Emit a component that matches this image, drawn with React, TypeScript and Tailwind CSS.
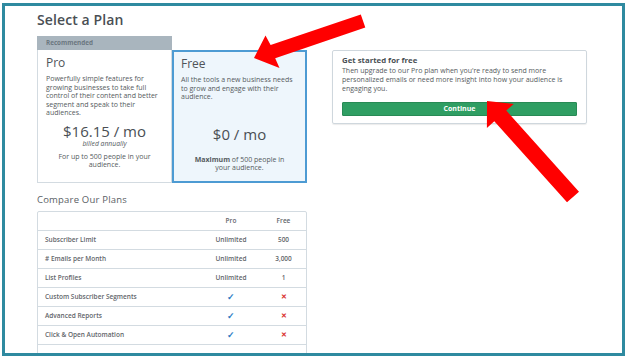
export default function App() {
  const rows: [string, string, string][] = [
    ["Subscriber Limit", "Unlimited", "500"],
    ["# Emails per Month", "Unlimited", "3,000"],
    ["List Profiles", "Unlimited", "1"],
    ["Custom Subscriber Segments", "check", "cross"],
    ["Advanced Reports", "check", "cross"],
    ["Click & Open Automation", "check", "cross"],
    ["", "", ""],
  ];

  const cell = (v: string) => {
    if (v === "check") return <span className="text-[#2a7bc4] text-[9px] font-bold">✓</span>;
    if (v === "cross") return <span className="text-[#d9302c] text-[7px] font-bold">✕</span>;
    return v;
  };

  return (
    <div className="relative w-[630px] h-[361px] bg-white overflow-hidden text-[#555b60] font-['Open_Sans',sans-serif]">
      <div className="ml-[2px] mt-[3px] w-[623px] h-[353px] border-[3px] border-[#2f8aa0] overflow-hidden">
        <div className="flex pl-[32px] pt-[4px] gap-[25px]">
          {/* left column */}
          <div className="w-[270px] flex flex-col">
            <h1 className="text-[14px] leading-[19px] font-semibold text-[#4a4f54] tracking-[0.1px]">Select a Plan</h1>

            <div className="mt-[7px] flex items-end">
              {/* Pro */}
              <div className="w-[135px] flex flex-col">
                <div className="h-[14px] bg-[#a9b5be] text-[6.3px] font-bold text-[#6b7780] pl-[9px] leading-[14px]">Recommended</div>
                <div className="h-[133px] border border-t-0 border-[#d3dbe1] pl-[8px] pr-[8px] pt-[5px]">
                  <div className="text-[12px] leading-[16px] text-[#4f5459]">Pro</div>
                  <p className="mt-[4px] text-[7px] leading-[8.5px]">
                    Powerfully simple features for growing businesses to take full control of their content and better segment and speak to their audiences.
                  </p>
                  <div className="mt-[5px] text-center text-[15px] leading-[16px] text-[#4a4f54]">$16.15 / mo</div>
                  <div className="text-center text-[6.8px] leading-[9px] italic">billed annually</div>
                  <p className="mt-[5px] px-[10px] text-center text-[7px] leading-[8.5px]">For up to 500 people in your audience.</p>
                </div>
              </div>
              {/* Free */}
              <div className="w-[135px] h-[133px] border-2 border-[#4d9bd3] bg-[#eef6fc] pl-[7px] pr-[7px] pt-[4px]">
                <div className="text-[12px] leading-[16px] text-[#4f5459]">Free</div>
                <p className="mt-[4px] text-[7px] leading-[8.5px]">All the tools a new business needs to grow and engage with their audience.</p>
                <div className="mt-[24px] text-center text-[15px] leading-[16px] text-[#4a4f54]">$0 / mo</div>
                <p className="mt-[14px] px-[6px] text-center text-[7px] leading-[8.5px]">
                  <b className="font-bold">Maximum</b> of 500 people in your audience.
                </p>
              </div>
            </div>

            <div className="mt-[10px] text-[9.5px] leading-[13px] text-[#5a6065] tracking-[0.2px]">Compare Our Plans</div>

            <div className="mt-[5px] border border-[#d3dbe1] rounded-[2px] text-[6.5px] font-semibold text-[#5f656a]">
              <div className="flex h-[19px] items-center border-b border-[#d3dbe1]">
                <div className="w-[163px]" />
                <div className="w-[60px] text-center">Pro</div>
                <div className="flex-1 text-center">Free</div>
              </div>
              {rows.map((r, i) => (
                <div key={i} className="flex h-[19px] items-center border-b border-[#d3dbe1]">
                  <div className="w-[163px] pl-[7px]">{r[0]}</div>
                  <div className="w-[60px] text-center">{cell(r[1])}</div>
                  <div className="flex-1 text-center">{cell(r[2])}</div>
                </div>
              ))}
            </div>
          </div>

          {/* right column */}
          <div className="w-[255px] mt-[40px]">
            <div className="border border-[#cfd7dd] rounded-[2px] shadow-[0_1px_1px_rgba(0,0,0,0.08)] px-[9px] pt-[4px] pb-[6px]">
              <div className="text-[7.8px] leading-[10px] font-bold text-[#4a4f54]">Get started for free</div>
              <p className="mt-[1px] text-[7px] leading-[9px]">
                Then upgrade to our Pro plan when you're ready to send more personalized emails or need more insight into how your audience is engaging you.
              </p>
              <button className="mt-[4px] w-full h-[14px] bg-[#2f9e63] border border-[#288a55] rounded-[1px] text-white text-[7px] font-bold leading-[12px]">
                Continue
              </button>
            </div>
          </div>
        </div>
      </div>

      {/* annotation arrows */}
      <svg className="absolute left-0 top-0 pointer-events-none" width="630" height="361" viewBox="0 0 630 361">
        <polygon fill="#ff0000" points="360.8,14.4 270.6,45 265.5,35.5 254,58 279.5,68 275.2,58.2 365.3,27.6" />
        <polygon fill="#ff0000" points="579,191.7 506.3,110.6 513.7,103.9 487,101 486.9,127.9 494.3,121.2 567,202.3" />
      </svg>
    </div>
  );
}
